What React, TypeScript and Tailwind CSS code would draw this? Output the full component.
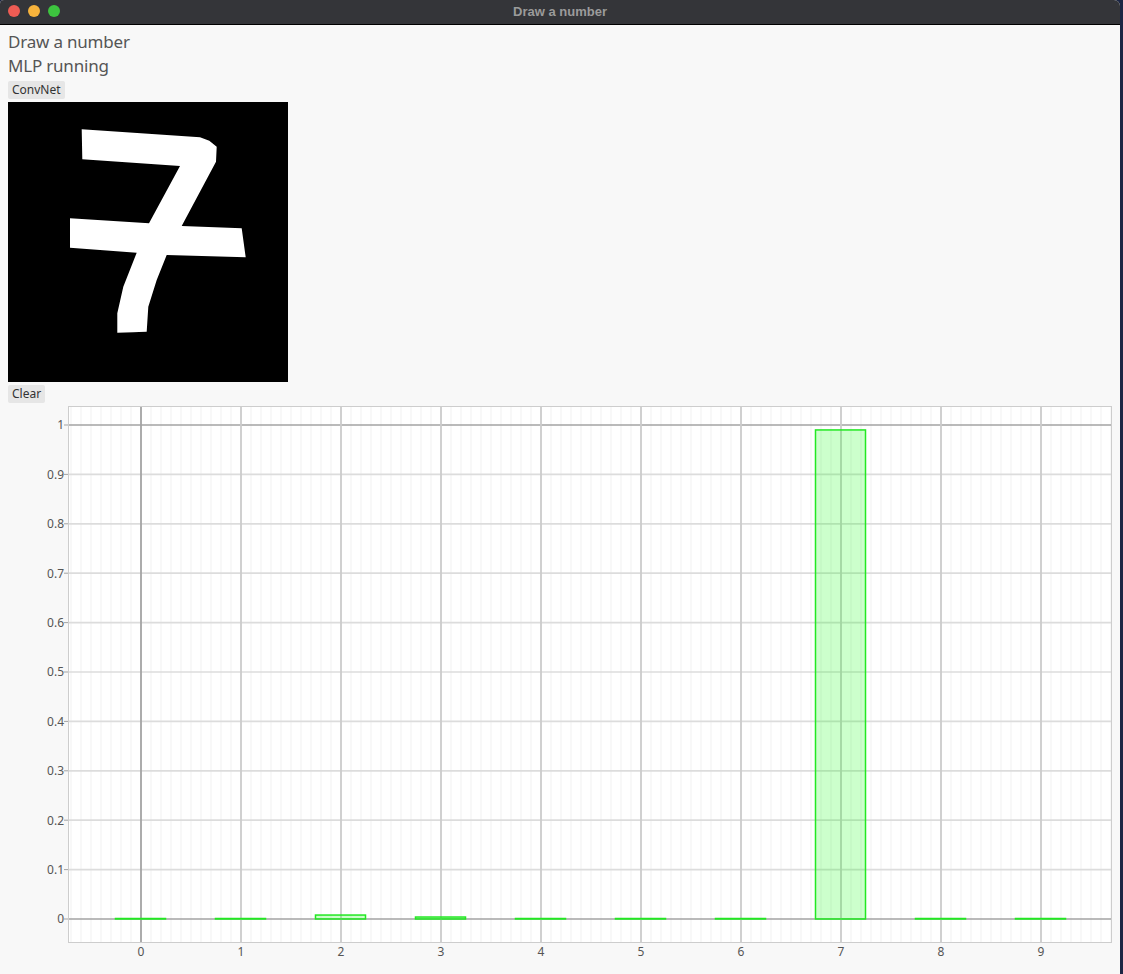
import React from 'react';

// Chart geometry (px inside the svg)
const PLOT_LEFT = 68;
const PLOT_RIGHT = 1112;
const PLOT_TOP = 0;
const PLOT_BOTTOM = 537;
const Y_ZERO = 513;
const Y_UNIT = 494;
const xPos = (v: number) => 141 + v * 100;
const yPos = (v: number) => Y_ZERO - v * Y_UNIT;

const probs = [0.0004, 0.0003, 0.008, 0.004, 0.0002, 0.0003, 0.0004, 0.99, 0.0004, 0.0002];

const SEVEN =
  '73.7,27.3 192,35.3 201.3,38.7 208.7,44.7 208,59.7 173.7,124 233.7,126.3 237.7,155.3 158.7,153 148.7,178 140.3,204.7 138.7,229.7 131,230 125.3,230.3 109.3,230.7 109.3,211.3 115.3,184.7 128.7,150.7 62,145.7 62,116.3 141,121.3 172,64 74.3,57.3';

const Chart: React.FC = () => {
  const minor: number[] = [];
  for (let x = 71; x < PLOT_RIGHT; x += 10) minor.push(x);
  const yTicks = Array.from({ length: 11 }, (_, i) => i / 10);
  const xTicks = Array.from({ length: 10 }, (_, i) => i);

  return (
    <svg width={1120} height={568} className="block" style={{ fontFamily: '"Noto Sans", sans-serif' }}>
      <rect x={PLOT_LEFT} y={PLOT_TOP} width={PLOT_RIGHT - PLOT_LEFT} height={PLOT_BOTTOM} fill="#ffffff" />
      {/* minor verticals */}
      {minor.map(x => (
        <line key={x} x1={x} x2={x} y1={PLOT_TOP} y2={PLOT_BOTTOM} stroke="#f1f1f1" strokeWidth={1} />
      ))}
      {/* horizontal grid */}
      {yTicks.map(v => (
        <line
          key={v}
          x1={PLOT_LEFT}
          x2={PLOT_RIGHT}
          y1={yPos(v)}
          y2={yPos(v)}
          stroke={v === 0 || v === 1 ? '#a3a3a3' : '#dcdcdc'}
          strokeWidth={1.7}
        />
      ))}
      {/* vertical majors */}
      {xTicks.map(v => (
        <line
          key={v}
          x1={xPos(v)}
          x2={xPos(v)}
          y1={PLOT_TOP}
          y2={PLOT_BOTTOM}
          stroke={v === 0 ? '#a3a3a3' : '#cbcbcb'}
          strokeWidth={1.8}
        />
      ))}
      {/* bars */}
      {probs.map((p, i) => {
        const h = Math.max(p * Y_UNIT, 0.5);
        return (
          <rect
            key={i}
            x={xPos(i) - 25.5}
            y={Y_ZERO - h}
            width={50}
            height={h}
            fill="rgba(0,255,0,0.2)"
            stroke="#22e822"
            strokeWidth={1.5}
          />
        );
      })}
      {/* plot border */}
      <rect
        x={PLOT_LEFT + 0.5}
        y={PLOT_TOP + 0.5}
        width={PLOT_RIGHT - PLOT_LEFT - 1}
        height={PLOT_BOTTOM - 1}
        fill="none"
        stroke="#cdcdcd"
        strokeWidth={1}
      />
      {/* y labels */}
      {yTicks.map(v => (
        <g key={v}>
          <line x1={64} x2={PLOT_LEFT} y1={yPos(v)} y2={yPos(v)} stroke="#a3a3a3" strokeWidth={1} />
          <text x={64} y={yPos(v) + 4.3} textAnchor="end" fontSize={12} fill="#555555">
            {v === 0 ? '0' : v === 1 ? '1' : v.toFixed(1)}
          </text>
        </g>
      ))}
      {/* x labels */}
      {xTicks.map(v => (
        <text key={v} x={xPos(v)} y={550} textAnchor="middle" fontSize={12} fill="#555555">
          {v}
        </text>
      ))}
    </svg>
  );
};

const App: React.FC = () => {
  return (
    <div className="w-[1123px] h-[974px] overflow-hidden bg-[#1c2644]">
      <div className="w-[1120px] h-full bg-[#f8f8f8] rounded-tr-[6px] rounded-tl-[4px] overflow-hidden flex flex-col">
        {/* title bar */}
        <div className="h-[25px] shrink-0 bg-[#343539] border-b border-black relative flex items-center justify-center">
          <div className="absolute left-[8px] top-[5px] flex gap-[8px]">
            <span className="w-[12px] h-[12px] rounded-full bg-[#ee5c54]" />
            <span className="w-[12px] h-[12px] rounded-full bg-[#f7b33c]" />
            <span className="w-[12px] h-[12px] rounded-full bg-[#3dc43f]" />
          </div>
          <span
            className="text-[13px] font-bold text-[#9b9b9b]"
            style={{ fontFamily: '"Liberation Sans", Arial, sans-serif' }}
          >
            Draw a number
          </span>
        </div>

        <div
          className="flex flex-col items-start gap-[3px] px-2 pt-[5px]"
          style={{ fontFamily: '"Noto Sans", sans-serif' }}
        >
          <div className="text-[17px] leading-[24px] tracking-[-0.2px] text-[#555555]">
            <div>Draw a number</div>
            <div>MLP running</div>
          </div>
          <button className="h-[18px] px-[4px] rounded-[2px] bg-[#e6e6e6] text-[12px] leading-[18px] text-[#333333]">
            ConvNet
          </button>
          <svg width={280} height={280} className="block bg-black">
            <polygon points={SEVEN} fill="#ffffff" />
          </svg>
          <button className="h-[18px] px-[4px] rounded-[2px] bg-[#e6e6e6] text-[12px] leading-[18px] text-[#333333]">
            Clear
          </button>
        </div>

        <div className="mt-[3px]">
          <Chart />
        </div>
      </div>
    </div>
  );
};

export default App;
